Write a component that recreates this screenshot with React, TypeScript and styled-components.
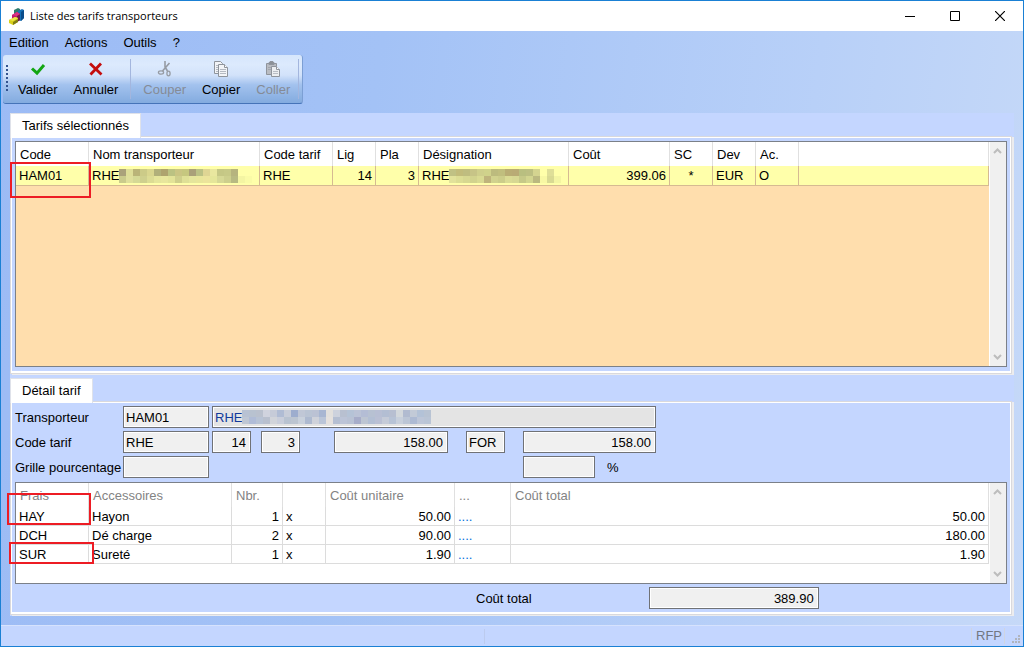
import React, { useId } from "react";
import styled, { createGlobalStyle } from "styled-components";

const GlobalStyle = createGlobalStyle`
  *, *::before, *::after { box-sizing: border-box; }
  body {
    margin: 0;
    font-family: "Liberation Sans", Arial, sans-serif;
    font-size: 13px;
    line-height: 16px;
    color: #000;
  }
  button, input {
    font: inherit;
    color: inherit;
    border-radius: 0;
  }
`;

const panelBlue = "#c4d6ff";

const Window = styled.div`
  min-height: 100vh;
  display: flex;
  flex-direction: column;
  border: 1px solid #1a80d4;
  background: linear-gradient(97deg, #9cbbf5 0%, #a3c2f6 35%, #b8d0f8 75%, #c6d9f8 100%);
`;

const TitleBar = styled.header`
  display: flex;
  align-items: center;
  height: 30px;
  padding-left: 8px;
  gap: 5px;
  background: #fff;
`;

const Title = styled.h1`
  flex: 1;
  margin: 0;
  font-family: "Open Sans", "Noto Sans", sans-serif;
  font-size: 11px;
  font-weight: 400;
`;

const WindowControls = styled.div`
  display: flex;
`;

const WindowButton = styled.button`
  display: flex;
  align-items: center;
  justify-content: center;
  width: 45px;
  height: 30px;
  padding: 0;
  border: 0;
  background: transparent;

  &:last-child {
    width: 46px;
  }
`;

const MenuBar = styled.nav`
  display: flex;
  align-items: center;
  gap: 16px;
  height: 24px;
  padding-left: 8px;
`;

const MenuItem = styled.button`
  padding: 0;
  border: 0;
  background: transparent;
`;

const Toolbar = styled.div`
  align-self: flex-start;
  display: flex;
  align-items: stretch;
  height: 49px;
  margin-left: 2px;
  padding: 2px 3px 2px 3px;
  border-radius: 3px;
  border-bottom: 1px solid #4573b8;
  border-right: 1px solid #7c9fd4;
  background: linear-gradient(180deg, #d6e6fc 0%, #dceafd 20%, #d2e2fa 42%, #a3c2ee 62%, #83abdf 100%);
`;

const Grip = styled.span`
  width: 2px;
  margin: 8px 2px 8px 0;
  background: repeating-linear-gradient(180deg, #33538f 0 2px, transparent 2px 4px);
`;

const ToolGroup = styled.div`
  display: flex;
`;

const ToolSeparator = styled.span`
  width: 1px;
  margin: 2px 4px;
  background: #a3b6de;

  &:last-child {
    margin: 2px 0;
  }
`;

const ToolButton = styled.button`
  display: flex;
  flex-direction: column;
  align-items: center;
  gap: 5px;
  padding: 4px 8px 0;
  border: 0;
  background: transparent;

  &:disabled {
    color: #858b96;
  }
`;

const Content = styled.main`
  flex: 1;
  display: flex;
  flex-direction: column;
  padding: 9px;
`;

const Section = styled.section<{ $grow?: boolean }>`
  flex: ${(p) => (p.$grow ? "1 0 auto" : "none")};
  display: flex;
  flex-direction: column;
  background: ${panelBlue};
`;

const TabStrip = styled.div<{ $spaced?: boolean }>`
  display: flex;
  padding-top: ${(p) => (p.$spaced ? 3 : 0)}px;
`;

const Tab = styled.button`
  position: relative;
  height: 25px;
  margin-bottom: -2px;
  padding: 0 11px;
  border: 1px solid #dfe2ea;
  border-bottom: 0;
  background: #fff;
`;

const Panel = styled.div`
  flex: 1;
  display: flex;
  flex-direction: column;
  margin: 0 2px 1px 0;
  padding: 4px 4px 0;
  border: 1px solid #d9d9dd;
  box-shadow: inset 0 0 0 1px #fff, inset 0 -2px 0 #fff, 2px 1px 0 #ececee;
`;

const TarifPanel = styled(Panel)`
  padding-bottom: 6px;
`;

const DetailPanel = styled(Panel)`
  padding-bottom: 5px;
`;

const GridFrame = styled.div<{ $fill: string; $minHeight: number; $grow?: boolean }>`
  flex: ${(p) => (p.$grow ? 1 : "none")};
  display: flex;
  min-height: ${(p) => p.$minHeight}px;
  border: 1px solid #7b8088;
  background: ${(p) => p.$fill};
`;

const GridArea = styled.div`
  flex: 1;
  min-width: 0;
`;

const DataTable = styled.table<{ $line: string; $rowFill: string; $rowHeight: number; $muted?: boolean }>`
  width: 100%;
  table-layout: fixed;
  border-collapse: separate;
  border-spacing: 0;

  th,
  td {
    white-space: nowrap;
    text-align: left;
    font-weight: 400;
  }

  th {
    height: 24px;
    padding: 2px 0 0 4px;
    background: #fff;
    color: ${(p) => (p.$muted ? "#838383" : "#000")};
    border-right: 1px solid #e0e0e0;
  }

  td {
    height: ${(p) => p.$rowHeight}px;
    padding: ${(p) => (p.$muted ? 2 : 0)}px 3px 0;
    background: ${(p) => p.$rowFill};
    border-right: 1px solid ${(p) => p.$line};
    border-bottom: 1px solid ${(p) => p.$line};
  }
`;

const Cell = styled.td<{ $align?: "right" | "center" }>`
  && {
    position: relative;
    text-align: ${(p) => p.$align ?? "left"};
  }
`;

const Dots = styled.a`
  color: #0070dc;
  text-decoration: none;
`;

const Highlight = styled.span<{ $top: number; $left: number; $width: number; $height: number }>`
  position: absolute;
  z-index: 1;
  top: ${(p) => p.$top}px;
  left: ${(p) => p.$left}px;
  width: ${(p) => p.$width}px;
  height: ${(p) => p.$height}px;
  border: 2px solid #ed1c24;
  pointer-events: none;
`;

const ScrollTrack = styled.div`
  display: flex;
  flex-direction: column;
  justify-content: space-between;
  width: 17px;
  border-left: 1px solid #fff;
  background: #f0f0f0;
`;

const ScrollButton = styled.button`
  display: flex;
  align-items: center;
  justify-content: center;
  height: 18px;
  padding: 0 2px 0 0;
  border: 0;
  background: transparent;
`;

const Form = styled.div`
  display: grid;
  grid-template-columns: 108px 86px 3px 39px 10px 39px 34px 114px 18px 39px 18px 72px 61px;
  grid-auto-rows: 22px;
  row-gap: 3px;
  align-items: center;
  margin-bottom: 4px;
`;

const Label = styled.label`
  padding-top: 2px;
  white-space: nowrap;
`;

const Field = styled.div<{ $col?: string }>`
  position: relative;
  grid-column: ${(p) => p.$col ?? "auto"};
`;

const TextBox = styled.input<{ $right?: boolean; $tone?: "name" }>`
  display: block;
  width: 100%;
  height: 22px;
  padding: 0 ${(p) => (p.$right ? 4 : 2)}px 0 2px;
  border: 1px solid #707276;
  box-shadow: inset 0 0 0 1px #fff;
  background: ${(p) => (p.$tone === "name" ? "#e4e4e4" : "#f0f0f0")};
  color: ${(p) => (p.$tone === "name" ? "#123a9c" : "#000")};
  text-align: ${(p) => (p.$right ? "right" : "left")};
  outline: 0;
`;

const Unit = styled.span`
  grid-column: 13;
  padding: 2px 0 0 12px;
`;

const TotalRow = styled.div`
  display: flex;
  align-items: center;
  gap: 117px;
  margin-top: 3px;
  padding-left: 461px;
`;

const TotalField = styled.div`
  width: 170px;
`;

const StatusBar = styled.footer`
  display: flex;
  justify-content: flex-end;
  align-items: center;
  height: 21px;
  border-top: 1px solid #d6e2fd;
  background: ${panelBlue};
`;

const StatusPane = styled.span`
  width: 487px;
  height: 15px;
  border-left: 1px solid #bccbee;
`;

const StatusText = styled.span`
  padding: 0 2px 0 4px;
  border-left: 1px solid #cfd5e2;
  border-right: 1px solid #cfd5e2;
  color: #727782;
`;

const ResizeGrip = styled.svg`
  margin: 6px 3px 0 7px;
`;

const MosaicSvg = styled.svg`
  vertical-align: top;
  margin-top: 1px;
`;

const FieldMosaic = styled.span`
  position: absolute;
  top: 3px;
  left: 30px;
`;

function Mosaic({ rows }: { rows: string[][] }) {
  const cols = Math.max(...rows.map((r) => r.length));
  return (
    <MosaicSvg width={cols * 7} height={14} shapeRendering="crispEdges" aria-hidden="true">
      {rows.map((row, y) =>
        row.map((fill, x) => <rect key={`${x}-${y}`} x={x * 7} y={y * 7} width={7} height={7} fill={fill} />)
      )}
    </MosaicSvg>
  );
}

const split = (s: string) => s.split(" ").map((c) => `#${c}`);

const nameMask = [
  split("aaa27a dede98 bab478 cccb88 d9d68f b1b07a aea36e bbc282 cac583 c6c77f aaa079 bbc185 dfd594 e9e79f c5c785 c7c987 b6b47e ffffaa ffffaa"),
  split("cacb8c dfdf9b d5d996 cfd08e dcdc94 e5e59b e8e69d e3e398 cfcf8b dfe097 e5e59c e8e59a ece49c e5e69a d6d895 cdcf8d b8ba82 f4f5a3 fafba7"),
];

const designationMask = [
  split("c0c184 c2bc7b bfbd80 c7c487 cfcf8c d0d28b bcbb7e c0be7e b9ad74 b9ab75 b9bf80 bcbf82 d4d490 ffffaa dfdf98 ffffaa"),
  split("e2e29b dcdd94 d7d891 d2d38e d9da92 bfb47c d1d28e cccd8a dadb94 d7d893 c6c988 d2d58f bbb980 f8f8a4 d9da93 f4f5a3"),
];

const transporterMask = [
  split("b8c2d3 b8c2d0 bac1ce d0d3de c6cbd8 b0bcd4 c8cdd9 9dadce c0c7d6 bac4d4 bbc2d4 a8b6d2 e2e0dd cdd2dd b8c0d0 b5c3d6 bbc3d6 b4bdd5 b7c1d2 b8bfd4 b3bed3 b7bfd1 d3d8dc b1bbd0 c2cad7 b3c2d7 b8c3d3"),
  split("bfc7d4 b0bcd7 b8c3d5 b9c0ce d1d4da c9cedb b9c3d1 bcc5d1 c9d1dc aebad0 cfd2da bac5d8 e5e1de b5bfd2 bcc4d7 b9c2d4 a7adc9 bdc5d2 b3bfd4 bac0d4 c5cbd8 b7c3d6 c8d0dc bcc6d6 adbad3 bdc6d8 bac5d6"),
];

function AppLogo() {
  return (
    <svg width="16" height="17" viewBox="0 0 16 17" aria-hidden="true">
      <path d="M5 2 9 0l2 1v5L7 8 5 7z" fill="#2e7b6c" />
      <path d="M9 3l4-2 2 1v8l-3 3-3-1z" fill="#1672b8" />
      <path d="M12 4l3-2v8l-3 3z" fill="#0b4c8a" />
      <path d="M3 7l5-3 3 2v6l-3 2-5-3z" fill="#c2186f" />
      <path d="M8 7l3-1v6l-3 2z" fill="#6d1749" />
      <path d="M3 7l5-3 3 2-3 2z" fill="#da3183" />
      <path d="M0 12l6-3 3 1v4l-5 3-4-2z" fill="#d8cf19" />
      <path d="M4 14l5-3v3l-5 3z" fill="#817d13" />
      <path d="M0 12l6-3 3 1-5 3z" fill="#eee64a" />
    </svg>
  );
}

function CheckIcon() {
  return (
    <svg width="16" height="16" viewBox="0 0 16 16" aria-hidden="true">
      <path d="M2 7.500l5 4.700L14 4" fill="none" stroke="#13a613" strokeWidth="3" />
    </svg>
  );
}

function CrossIcon() {
  return (
    <svg width="16" height="16" viewBox="0 0 16 16" aria-hidden="true">
      <path d="M2 2.500 13.500 13.500M13 2.500 2.500 13.500" fill="none" stroke="#c40d0d" strokeWidth="2.800" />
    </svg>
  );
}

function ScissorsIcon() {
  return (
    <svg width="16" height="16" viewBox="0 0 16 16" aria-hidden="true" fill="none" stroke="#969ba3">
      <path d="M8 0v6l2.500 4M12.500 2 5.500 10" strokeWidth="1.600" />
      <ellipse cx="4" cy="11.500" rx="2.600" ry="1.600" strokeWidth="1.300" />
      <ellipse cx="11.500" cy="12.500" rx="1.600" ry="2.400" strokeWidth="1.300" />
    </svg>
  );
}

function CopyIcon() {
  return (
    <svg width="16" height="16" viewBox="0 0 16 16" aria-hidden="true" stroke="#8e949c" fill="#f2f4f7">
      <path d="M1.500.5h6l2 2v10h-8z" />
      <path d="M3 4.500h3M3 6.500h3M3 8.500h3M3 10.500h3" stroke="#b4b9c1" />
      <path d="M5.500 3.500h6l3 3v9h-9z" />
      <path d="M11.500 3.500v3h3" fill="#fff" />
      <path d="M7 8.500h6M7 10.500h6M7 12.500h6" stroke="#b4b9c1" />
    </svg>
  );
}

function PasteIcon() {
  return (
    <svg width="16" height="16" viewBox="0 0 16 16" aria-hidden="true" stroke="#8f949c">
      <path d="M1.500 2.500h10v11h-10z" fill="#b9bcc2" />
      <path d="M4 3.500h5v-2H8V.5H5v1H4z" fill="#8b9097" />
      <path d="M3 6.500h3M3 8.500h3" stroke="#a2a6ad" />
      <path d="M6.500 5.500h5l3 3v7h-8z" fill="#eceef1" />
      <path d="M11.500 5.500v3h3" fill="#fff" />
      <path d="M8 10.500h5M8 12.500h5" stroke="#b9bdc4" />
    </svg>
  );
}

function Scrollbar({ label }: { label: string }) {
  return (
    <ScrollTrack role="group" aria-label={label}>
      <ScrollButton aria-label="Monter">
        <svg width="9" height="6" viewBox="0 0 9 6">
          <path d="M1 5l3.500-3.500L8 5" fill="none" stroke="#bdbdbd" strokeWidth="2" />
        </svg>
      </ScrollButton>
      <ScrollButton aria-label="Descendre">
        <svg width="9" height="6" viewBox="0 0 9 6">
          <path d="M1 1l3.500 3.500L8 1" fill="none" stroke="#bdbdbd" strokeWidth="2" />
        </svg>
      </ScrollButton>
    </ScrollTrack>
  );
}

interface BoxProps {
  id?: string;
  value?: string;
  name?: string;
  col?: string;
  right?: boolean;
  tone?: "name";
  children?: React.ReactNode;
}

function BoxField({ id, value = "", name, col, right, tone, children }: BoxProps) {
  return (
    <Field $col={col}>
      <TextBox id={id} type="text" readOnly value={value} aria-label={name} $right={right} $tone={tone} />
      {children}
    </Field>
  );
}

const fees = [
  { code: "HAY", label: "Hayon", count: 1, unit: "50.00", total: "50.00", mark: { $top: -14, $left: -9, $width: 84, $height: 32 } },
  { code: "DCH", label: "Dé charge", count: 2, unit: "90.00", total: "180.00", mark: null },
  { code: "SUR", label: "Sureté", count: 1, unit: "1.90", total: "1.90", mark: { $top: -3, $left: -7, $width: 85, $height: 22 } },
];

const tarifWidths = [73, 171, 73, 43, 43, 150, 101, 43, 43, 43];
const feeWidths = [73, 143, 51, 43, 129, 56];

function Columns({ widths }: { widths: number[] }) {
  return (
    <colgroup>
      {widths.map((w, i) => (
        <col key={i} width={w} />
      ))}
      <col />
    </colgroup>
  );
}

export default function App() {
  const id = useId();
  return (
    <>
      <GlobalStyle />
      <Window>
        <TitleBar>
          <AppLogo />
          <Title>Liste des tarifs transporteurs</Title>
          <WindowControls>
            <WindowButton aria-label="Réduire">
              <svg width="10" height="10" viewBox="0 0 10 10">
                <path d="M0 5.500h10" stroke="#000" />
              </svg>
            </WindowButton>
            <WindowButton aria-label="Agrandir">
              <svg width="10" height="10" viewBox="0 0 10 10">
                <path d="M.5.5h9v9h-9z" fill="none" stroke="#000" />
              </svg>
            </WindowButton>
            <WindowButton aria-label="Fermer">
              <svg width="10" height="10" viewBox="0 0 10 10">
                <path d="M0 0l10 10M10 0 0 10" stroke="#000" strokeWidth="1.200" />
              </svg>
            </WindowButton>
          </WindowControls>
        </TitleBar>

        <MenuBar>
          <MenuItem>Edition</MenuItem>
          <MenuItem>Actions</MenuItem>
          <MenuItem>Outils</MenuItem>
          <MenuItem>?</MenuItem>
        </MenuBar>

        <Toolbar role="toolbar">
          <Grip />
          <ToolGroup>
            <ToolButton><CheckIcon />Valider</ToolButton>
            <ToolButton><CrossIcon />Annuler</ToolButton>
          </ToolGroup>
          <ToolSeparator />
          <ToolGroup>
            <ToolButton disabled><ScissorsIcon />Couper</ToolButton>
            <ToolButton><CopyIcon />Copier</ToolButton>
            <ToolButton disabled><PasteIcon />Coller</ToolButton>
          </ToolGroup>
          <ToolSeparator />
        </Toolbar>

        <Content>
          <Section $grow>
            <TabStrip role="tablist">
              <Tab role="tab" aria-selected="true">Tarifs sélectionnés</Tab>
            </TabStrip>
            <TarifPanel role="tabpanel">
              <GridFrame $fill="#ffdead" $minHeight={120} $grow>
                <GridArea>
                  <DataTable $line="#d6ba92" $rowFill="#ffffaa" $rowHeight={20}>
                    <Columns widths={tarifWidths} />
                    <thead>
                      <tr>
                        <th>Code</th>
                        <th>Nom transporteur</th>
                        <th>Code tarif</th>
                        <th>Lig</th>
                        <th>Pla</th>
                        <th>Désignation</th>
                        <th>Coût</th>
                        <th>SC</th>
                        <th>Dev</th>
                        <th>Ac.</th>
                        <th />
                      </tr>
                    </thead>
                    <tbody>
                      <tr>
                        <Cell>
                          HAM01
                          <Highlight $top={-4} $left={-6} $width={81} $height={36} />
                        </Cell>
                        <Cell>RHE<Mosaic rows={nameMask} /></Cell>
                        <Cell>RHE</Cell>
                        <Cell $align="right">14</Cell>
                        <Cell $align="right">3</Cell>
                        <Cell>RHE<Mosaic rows={designationMask} /></Cell>
                        <Cell $align="right">399.06</Cell>
                        <Cell $align="center">*</Cell>
                        <Cell>EUR</Cell>
                        <Cell>O</Cell>
                        <Cell />
                      </tr>
                    </tbody>
                  </DataTable>
                </GridArea>
                <Scrollbar label="Défilement des tarifs" />
              </GridFrame>
            </TarifPanel>
          </Section>

          <Section>
            <TabStrip role="tablist" $spaced>
              <Tab role="tab" aria-selected="true">Détail tarif</Tab>
            </TabStrip>
            <DetailPanel role="tabpanel">
              <Form>
                <Label htmlFor={`${id}t`}>Transporteur</Label>
                <BoxField id={`${id}t`} value="HAM01" col="2" />
                <BoxField name="Nom du transporteur" value="RHE" col="4 / 14" tone="name">
                  <FieldMosaic><Mosaic rows={transporterMask} /></FieldMosaic>
                </BoxField>

                <Label htmlFor={`${id}c`}>Code tarif</Label>
                <BoxField id={`${id}c`} value="RHE" col="2" />
                <BoxField name="Ligne" value="14" col="4" right />
                <BoxField name="Palier" value="3" col="6" right />
                <BoxField name="Montant" value="158.00" col="8" right />
                <BoxField name="Type" value="FOR" col="10" />
                <BoxField name="Montant retenu" value="158.00" col="12 / 14" right />

                <Label htmlFor={`${id}g`}>Grille pourcentage</Label>
                <BoxField id={`${id}g`} col="2" />
                <BoxField name="Pourcentage" col="12" right />
                <Unit>%</Unit>
              </Form>

              <GridFrame $fill="#fff" $minHeight={102}>
                <GridArea>
                  <DataTable $line="#dcdcdc" $rowFill="#fff" $rowHeight={19} $muted>
                    <Columns widths={feeWidths} />
                    <thead>
                      <tr>
                        <th>Frais</th>
                        <th>Accessoires</th>
                        <th>Nbr.</th>
                        <th />
                        <th>Coût unitaire</th>
                        <th>...</th>
                        <th>Coût total</th>
                      </tr>
                    </thead>
                    <tbody>
                      {fees.map((fee) => (
                        <tr key={fee.code}>
                          <Cell>
                            {fee.code}
                            {fee.mark && <Highlight {...fee.mark} />}
                          </Cell>
                          <Cell>{fee.label}</Cell>
                          <Cell $align="right">{fee.count}</Cell>
                          <Cell>x</Cell>
                          <Cell $align="right">{fee.unit}</Cell>
                          <Cell><Dots href="#">....</Dots></Cell>
                          <Cell $align="right">{fee.total}</Cell>
                        </tr>
                      ))}
                    </tbody>
                  </DataTable>
                </GridArea>
                <Scrollbar label="Défilement des frais" />
              </GridFrame>

              <TotalRow>
                <Label htmlFor={`${id}x`}>Coût total</Label>
                <TotalField>
                  <TextBox id={`${id}x`} type="text" readOnly value="389.90" $right />
                </TotalField>
              </TotalRow>
            </DetailPanel>
          </Section>
        </Content>

        <StatusBar>
          <StatusPane />
          <StatusText>RFP</StatusText>
          <ResizeGrip width="8" height="8" viewBox="0 0 8 8" aria-hidden="true">
            <path d="M6 0h2v2H6zM3 3h2v2H3zM6 3h2v2H6zM0 6h2v2H0zM3 6h2v2H3zM6 6h2v2H6z" fill="#b0b4bd" />
          </ResizeGrip>
        </StatusBar>
      </Window>
    </>
  );
}
